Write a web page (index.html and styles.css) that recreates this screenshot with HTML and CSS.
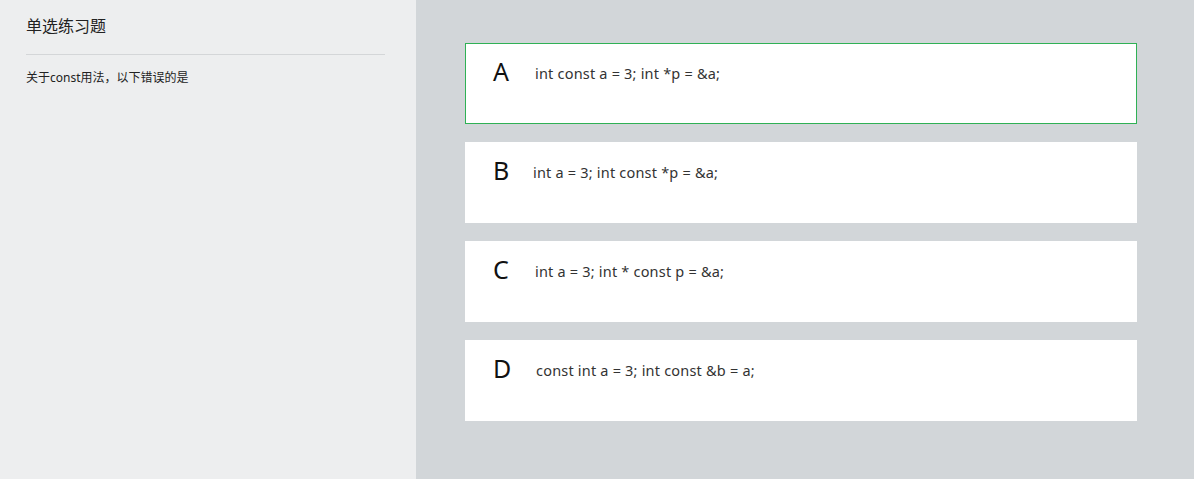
FILE: index.html
```html
<!DOCTYPE html>
<html lang="zh">
<head>
<meta charset="utf-8">
<link rel="stylesheet" href="styles.css">
</head>
<body>
<div class="page">
  <aside class="side">
    <h1 class="title">单选练习题</h1>
    <p class="question">关于const用法，以下错误的是</p>
  </aside>
  <main class="main">
    <div class="option selected"><span class="letter">A</span><span class="code">int const a = 3; int *p = &amp;a;</span></div>
    <div class="option"><span class="letter">B</span><span class="code b">int a = 3; int const *p = &amp;a;</span></div>
    <div class="option"><span class="letter">C</span><span class="code">int a = 3; int * const p = &amp;a;</span></div>
    <div class="option"><span class="letter">D</span><span class="code d">const int a = 3; int const &amp;b = a;</span></div>
  </main>
</div>
</body>
</html>
```
FILE: styles.css
```css
html, body { margin: 0; padding: 0; height: 100%; }
body { font-family: "Noto Sans", "Noto Sans CJK SC", sans-serif; color: #222; }
.page { display: flex; height: 479px; }
.side { width: 416px; background: #edeeef; padding: 0 31px 0 26px; box-sizing: border-box; }
.title { margin: 0; padding: 15px 0 17px; font-size: 16px; font-weight: normal; line-height: 22px; color: #222; border-bottom: 1px solid #d4d6d8; }
.question { margin: 14px 0 0; font-size: 12px; line-height: 18px; color: #222; }
.main { flex: 1; background: #d2d6d9; padding: 43px 0 0 49px; display: flex; flex-direction: column; gap: 18px; }
.option { width: 672px; height: 81px; box-sizing: border-box; background: #fff; border: 1px solid #fff; display: flex; align-items: flex-start; padding: 11px 0 0 27px; }
.option.selected { border: 1px solid #2fb155; }
.letter { width: 42px; font-size: 25px; line-height: 32px; color: #111; }
.code { font-size: 14.5px; letter-spacing: 0.2px; line-height: 32px; padding-top: 2px; color: #333; }
.code.b { margin-left: -2px; }
.code.d { margin-left: 1px; }
```
